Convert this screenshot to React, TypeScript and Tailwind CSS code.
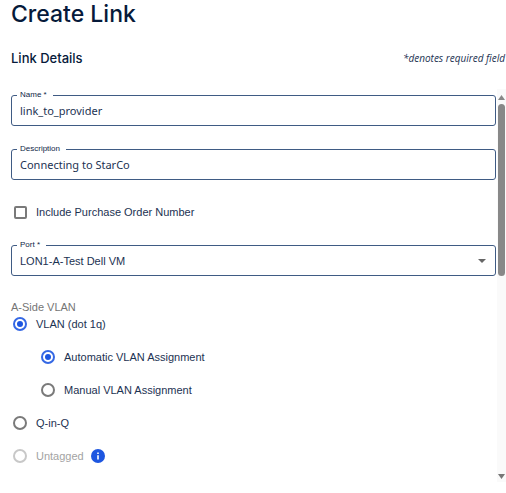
import React, { useState } from 'react';
import clsx from 'clsx';

interface OutlinedFieldProps {
  id: string;
  label: string;
  children: React.ReactNode;
}

// Outlined field with its label sitting in the top border
const OutlinedField: React.FC<OutlinedFieldProps> = ({ id, label, children }) => (
  <fieldset className="min-w-0 rounded-[3px] border border-[#3f5b84] px-[5px]">
    <legend className="pr-[6px] pl-[3px] text-[8px] leading-3 text-[#0f2747]">
      <label htmlFor={id}>{label}</label>
    </legend>
    <div className="relative flex h-6 items-start px-[3px]">{children}</div>
  </fieldset>
);

interface RadioOptionProps {
  name: string;
  label: string;
  checked: boolean;
  disabled?: boolean;
  onChange?: () => void;
}

const RadioOption: React.FC<RadioOptionProps> = ({ name, label, checked, disabled, onChange }) => (
  <label className={clsx('flex h-4 items-center gap-[9px] text-[11px] leading-4', disabled && 'text-[#a3a3a3]')}>
    <input
      type="radio"
      name={name}
      checked={checked}
      disabled={disabled}
      onChange={onChange}
      className="grid size-[14px] shrink-0 appearance-none place-content-center rounded-full border-2 border-[#7a7a7a] before:size-[6px] before:rounded-full checked:border-[#3568e4] checked:before:bg-[#1d56e0] disabled:border-[#c8c8c8]"
    />
    {label}
  </label>
);

const ScrollRail: React.FC = () => (
  <div aria-hidden="true" className="flex w-[9px] shrink-0 flex-col items-center bg-[#fafafa] pt-[6px] pb-[3px]">
    <svg width="7" height="5" viewBox="0 0 7 5" className="mb-1 shrink-0">
      <path d="M3.5 0L7 5H0z" fill="#888" />
    </svg>
    <div className="h-[172px] w-[7px] rounded-full bg-[#888]" />
    <svg width="7" height="5" viewBox="0 0 7 5" className="mt-auto shrink-0">
      <path d="M0 0h7L3.5 5z" fill="#777" />
    </svg>
  </div>
);

const App: React.FC = () => {
  const [name, setName] = useState('link_to_provider');
  const [description, setDescription] = useState('Connecting to StarCo');
  const [vlan, setVlan] = useState('dot1q');
  const [assignment, setAssignment] = useState('auto');

  return (
    <main className="bg-white pl-[11px] font-['Liberation_Sans',Arial,sans-serif] text-[#1c3252]">
      <h1 className="font-['Inter',sans-serif] text-[23px] leading-7 font-medium text-[#061a3a]">Create Link</h1>

      <div className="mt-5 flex items-center justify-between pr-px">
        <h2 className="font-['Inter',sans-serif] text-[13px] leading-5 font-medium text-[#061a3a]">Link Details</h2>
        <p className="font-['Open_Sans',sans-serif] text-[10px] leading-5 italic">*denotes required field</p>
      </div>

      <div className="mt-[21px] flex">
        <form className="min-w-0 flex-1 pr-px pb-[18px]">
          <div className="flex flex-col gap-[17px]">
            <OutlinedField id="name" label="Name *">
              <input
                id="name"
                type="text"
                value={name}
                onChange={e => setName(e.target.value)}
                className="h-5 w-full bg-transparent font-['Noto_Sans',sans-serif] text-[11px] leading-5 outline-none"
              />
            </OutlinedField>
            <OutlinedField id="description" label="Description">
              <input
                id="description"
                type="text"
                value={description}
                onChange={e => setDescription(e.target.value)}
                className="h-5 w-full bg-transparent font-['Noto_Sans',sans-serif] text-[11px] leading-5 outline-none"
              />
            </OutlinedField>
          </div>

          <label className="mt-4 mb-[11px] flex h-8 items-center gap-[9px] pl-[3px] text-[11px] leading-4">
            <input type="checkbox" className="size-[13px] appearance-none rounded-[2px] border-2 border-[#7a7a7a] checked:bg-[#1d56e0]" />
            Include Purchase Order Number
          </label>

          <OutlinedField id="port" label="Port *">
            <select id="port" className="h-5 w-full appearance-none bg-transparent text-[11px] leading-5 outline-none">
              <option>LON1-A-Test Dell VM</option>
            </select>
            <svg width="8" height="4" viewBox="0 0 8 4" className="pointer-events-none absolute top-2 right-1">
              <path d="M0 0h8L4 4z" fill="#666" />
            </svg>
          </OutlinedField>

          <div role="radiogroup" aria-labelledby="vlan-label" className="mt-[23px]">
            <p id="vlan-label" className="text-[11px] leading-4 text-[#757575]">A-Side VLAN</p>
            <div className="mt-px flex flex-col gap-[17px] pl-[2px]">
              <RadioOption name="vlan" label="VLAN (dot 1q)" checked={vlan === 'dot1q'} onChange={() => setVlan('dot1q')} />
              <div className="flex flex-col gap-[17px] pl-7">
                <RadioOption name="assignment" label="Automatic VLAN Assignment" checked={assignment === 'auto'} onChange={() => setAssignment('auto')} />
                <RadioOption name="assignment" label="Manual VLAN Assignment" checked={assignment === 'manual'} onChange={() => setAssignment('manual')} />
              </div>
              <RadioOption name="vlan" label="Q-in-Q" checked={vlan === 'qinq'} onChange={() => setVlan('qinq')} />
              <div className="flex items-center gap-[7px]">
                <RadioOption name="vlan" label="Untagged" checked={false} disabled />
                <button type="button" aria-label="About untagged VLANs">
                  <svg width="14" height="14" viewBox="0 0 14 14" className="block">
                    <circle cx="7" cy="7" r="7" fill="#1d56e0" />
                    <path d="M6.2 3.4h1.6v1.5H6.2zM6.2 6.2h1.6v4.3H6.2z" fill="#fff" />
                  </svg>
                </button>
              </div>
            </div>
          </div>
        </form>
        <ScrollRail />
      </div>
    </main>
  );
};

export default App;
